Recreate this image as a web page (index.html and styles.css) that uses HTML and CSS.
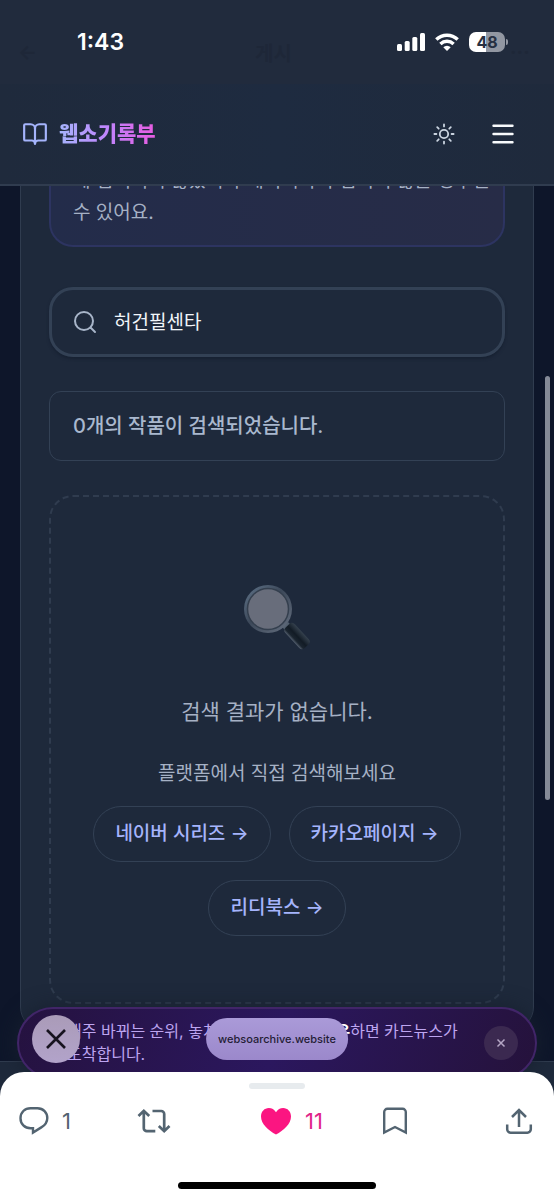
FILE: index.html
```html
<!DOCTYPE html>
<html lang="ko">
<head>
<meta charset="utf-8">
<meta name="viewport" content="width=device-width, initial-scale=1">
<title>웹소기록부</title>
<link rel="stylesheet" href="styles.css">
</head>
<body>
<div class="screen">
  <header class="header">
    <div class="status">
      <div class="underlay" aria-hidden="true"><span>←</span><span>게시</span><span>···</span></div>
      <time class="clock">1:43</time>
      <div class="indicators">
        <svg width="28" height="18" viewBox="0 0 28 18" fill="#fff" aria-hidden="true"><rect x="0" y="11" width="5" height="7" rx="1.5"/><rect x="7.700" y="8" width="5" height="10" rx="1.500"/><rect x="15.300" y="4" width="5" height="14" rx="1.500"/><rect x="23" y="0" width="5" height="18" rx="1.500"/></svg>
        <svg width="24" height="18" viewBox="0 0 24 18" fill="none" stroke="#fff" stroke-width="3.400" aria-hidden="true"><path d="M1.300 6.500a15.500 15.500 0 0 1 21.400 0"/><path d="M5.400 10.900a9.600 9.600 0 0 1 13.200 0"/><path d="M8.300 14.200a5.200 5.200 0 0 1 7.400 0L12 17.900z" fill="#fff" stroke="none"/></svg>
        <div class="battery"><span>48</span></div>
      </div>
    </div>
    <nav class="nav">
      <a class="brand" href="#">
        <svg width="26" height="26" viewBox="0 0 24 24" fill="none" stroke="#a5b4fc" stroke-width="2" stroke-linecap="round" stroke-linejoin="round" aria-hidden="true"><path d="M12 7v14"/><path d="M3 18a1 1 0 0 1-1-1V4a1 1 0 0 1 1-1h5a4 4 0 0 1 4 4 4 4 0 0 1 4-4h5a1 1 0 0 1 1 1v13a1 1 0 0 1-1 1h-6a3 3 0 0 0-3 3 3 3 0 0 0-3-3z"/></svg>
        <span>웹소기록부</span>
      </a>
      <div class="tools">
        <button class="tool" aria-label="테마 변경"><svg width="22" height="22" viewBox="0 0 22 22" fill="none" stroke="#cbd5e1" stroke-width="1.800" stroke-linecap="round"><circle cx="11" cy="11" r="4.200"/><path d="M11 1.400v2M11 18.600v2M1.400 11h2M18.600 11h2M4.200 4.200l1.500 1.500M16.300 16.300l1.500 1.500M4.200 17.800l1.500-1.500M16.300 5.700l1.500-1.500"/></svg></button>
        <button class="tool" aria-label="메뉴"><svg width="22" height="22" viewBox="0 0 22 22" stroke="#f8fafc" stroke-width="2.400" stroke-linecap="round"><path d="M1.500 2.700h19M1.500 11h19M1.500 19.200h19"/></svg></button>
      </div>
    </nav>
  </header>

  <main class="main">
    <section class="card">
      <p class="notice">에 검색되지 않았거나 데이터가 수집되지 않는 경우일 수 있어요.</p>
      <label class="search">
        <svg width="24" height="24" viewBox="0 0 24 24" fill="none" stroke="#a8b5c9" stroke-width="2" stroke-linecap="round" aria-hidden="true"><circle cx="11" cy="11" r="9"/><path d="M17.500 17.500l4.500 4.500"/></svg>
        <input type="text" value="허건필센타" aria-label="작품 검색">
      </label>
      <p class="count">0개의 작품이 검색되었습니다.</p>
      <div class="empty">
        <svg class="glass" width="68" height="68" viewBox="0 0 68 68" aria-hidden="true">
          <defs>
            <linearGradient id="rim" x1="0" y1="0" x2="1" y2="1"><stop offset="0" stop-color="#60748a"/><stop offset=".45" stop-color="#3c4859"/><stop offset="1" stop-color="#667080"/></linearGradient>
            <linearGradient id="grip" x1="0" y1="1" x2="0" y2="0"><stop offset="0" stop-color="#566170"/><stop offset=".2" stop-color="#1b2530"/><stop offset=".5" stop-color="#121b25"/><stop offset="1" stop-color="#35414e"/></linearGradient>
          </defs>
          <path d="M39 43l6-5 5 5-6 5z" fill="#536070"/>
          <rect x="40" y="45.500" width="28" height="13" rx="4" transform="rotate(47 54 52)" fill="url(#grip)"/>
          <circle cx="25" cy="25" r="24" fill="url(#rim)"/>
          <circle cx="25" cy="25" r="20.500" fill="#686d7b" stroke="#343f4e" stroke-width="1.500"/>
        </svg>
        <h2>검색 결과가 없습니다.</h2>
        <p>플랫폼에서 직접 검색해보세요</p>
        <div class="links">
          <a href="#">네이버 시리즈 →</a>
          <a href="#">카카오페이지 →</a>
          <a href="#">리디북스 →</a>
        </div>
      </div>
    </section>
    <footer class="footer"></footer>
    <div class="scrollbar"></div>
  </main>

  <aside class="banner">
    <p>매주 바뀌는 순위, 놓치지 마세요 — <strong>팔로우</strong>하면 카드뉴스가 도착합니다.</p>
    <button class="dismiss" aria-label="배너 닫기"><svg width="10" height="10" viewBox="0 0 10 10" stroke="#b5a7c5" stroke-width="1.500"><path d="M1.500 1.500l7 7M8.500 1.500l-7 7"/></svg></button>
  </aside>
  <button class="close" aria-label="닫기"><svg width="20" height="20" viewBox="0 0 20 20" stroke="#17131f" stroke-width="2.600"><path d="M1 1l18 18M19 1L1 19"/></svg></button>
  <div class="address">websoarchive.website</div>

  <div class="sheet">
    <div class="handle"></div>
    <div class="actions">
      <button class="action"><svg width="30" height="30" viewBox="0 0 30 30" fill="none" stroke="#536471" stroke-width="2.400"><path d="M11.500 2.200h7C24.300 2.200 28.300 6.600 28.300 12c0 4.300-2.200 7.200-6 9.400L14 26.600v-4.400h-2.500C5.700 22.200 1.500 18 1.500 12.200S5.700 2.200 11.500 2.200z"/></svg><span>1</span></button>
      <button class="action" aria-label="재게시"><svg width="34" height="28" viewBox="0 0 34 28" fill="none" stroke="#536471" stroke-width="2.700"><path d="M1.500 9l5.300-5.200L12.200 9M6.800 4.500v16.700a3 3 0 0 0 3 3h8.500M15.500 4h8.700a3 3 0 0 1 3 3v16.500M21.800 19l5.400 5.200 5.300-5.200"/></svg></button>
      <button class="action liked"><svg width="32" height="28" viewBox="0 0 32 28" fill="#fb1581"><path d="M16 27.500C8.500 23.500 1 17 1 9.500 1 4.500 4.500 1 8.800 1c3 0 5.600 1.500 7.200 4.300C17.600 2.500 20.200 1 23.200 1 27.500 1 31 4.500 31 9.500c0 7.500-7.500 14-15 18z"/></svg><span>11</span></button>
      <button class="action" aria-label="북마크"><svg width="26" height="28" viewBox="0 0 26 28" fill="none" stroke="#536471" stroke-width="2.400"><path d="M2.200 25.500V5a3.200 3.200 0 0 1 3.200-3.200h15.200A3.200 3.200 0 0 1 23.800 5v20.500L13 20z"/></svg></button>
      <button class="action" aria-label="공유"><svg width="28" height="28" viewBox="0 0 28 28" fill="none" stroke="#536471" stroke-width="2.500"><path d="M14 20V3M7 10l7-7 7 7M2.200 17.500v4.800a3.400 3.400 0 0 0 3.400 3.400h16.800a3.400 3.400 0 0 0 3.400-3.400v-4.800"/></svg></button>
    </div>
    <div class="home"></div>
  </div>
</div>
</body>
</html>
```
FILE: styles.css
```css
* { box-sizing: border-box; }
body {
  margin: 0;
  background: #0e162a;
  color: #a6b1c5;
  font-family: Inter, "Noto Sans CJK KR", sans-serif;
  word-break: keep-all;
}
p, h2 { margin: 0; font-weight: 400; }
button { border: 0; padding: 0; background: none; font: inherit; color: inherit; }
a { color: inherit; text-decoration: none; }
svg { display: block; flex: none; }

.screen { position: relative; height: 100vh; display: flex; flex-direction: column; overflow: hidden; }

.header { flex: none; background: #1f2a3c; border-bottom: 2px solid #303c4f; }
.status {
  position: relative;
  display: flex; align-items: center; justify-content: space-between;
  height: 84px; padding: 0 49px 0 77px;
  background: #212b3d;
}
.underlay {
  position: absolute; inset: 20px 24px 0 18px;
  display: flex; align-items: center; justify-content: space-between;
  color: #1e2738; font-size: 20px; font-weight: 700;
}
.clock { position: relative; color: #fff; font-size: 23px; line-height: 28px; font-weight: 600; }
.indicators { position: relative; display: flex; align-items: center; gap: 10px; }
.battery {
  position: relative; width: 36px; height: 20px; border-radius: 7px;
  background: linear-gradient(90deg, #fff 48%, #9297a2 48%);
  color: #273142; font-size: 16px; line-height: 20px; font-weight: 700; text-align: center;
}
.battery::after {
  content: ""; position: absolute; left: 37px; top: 7px; width: 2px; height: 6px;
  border-radius: 0 2px 2px 0; background: #9297a2;
}
.nav {
  display: flex; align-items: center; justify-content: space-between;
  height: 100px; padding: 0 40px 0 22px;
  background: linear-gradient(90deg, #1f2a3c, #1e2b40 50%, #1f2a3c);
}
.brand { display: flex; align-items: center; gap: 11px; font-size: 21px; line-height: 32px; font-weight: 800; }
.brand span {
  background: linear-gradient(90deg, #a5b4fc, #c084fc 50%, #e85be0);
  background-clip: text; -webkit-background-clip: text; color: transparent;
}
.tools { display: flex; gap: 37px; }
.tool { display: flex; }

.main { position: relative; flex: 1; overflow: hidden; display: flex; flex-direction: column; }
.card {
  flex: none; margin: -22px 20px 30px; padding: 0 28px 26px;
  background: #1e293b; border: 1px solid #303c4f; border-radius: 0 0 24px 24px;
}
.notice {
  padding: 0 12px 16px 22px; border: 2px solid #2d3461; border-top: 0; border-radius: 0 0 24px 24px;
  background: linear-gradient(90deg, #232c4a, #272c47);
  font-size: 19px; line-height: 32px;
}
.search {
  display: flex; align-items: center; gap: 17px;
  height: 70px; margin-top: 40px; padding: 0 21px;
  border: 3px solid #334155; border-radius: 24px;
  box-shadow: 0 2px 3px #172132;
}
.search input {
  flex: 1; min-width: 0; border: 0; padding: 2px 0 0; outline: 0; background: none;
  color: #f1f5f9; font: inherit; font-size: 19px; line-height: 28px;
}
.count {
  margin-top: 34px; padding: 20px 23px; border: 1px solid #334155; border-radius: 12px;
  color: #a9b8ce; font-size: 20px; line-height: 28px; font-weight: 500;
}
.empty {
  display: flex; flex-direction: column; align-items: center;
  margin-top: 34px; padding: 87px 24px 66px;
  border: 2px dashed #303c4f; border-radius: 24px;
}
.empty h2 { margin-top: 44px; font-size: 21px; line-height: 32px; }
.empty p { margin-top: 32px; font-size: 19px; line-height: 28px; }
.links { display: flex; flex-wrap: wrap; justify-content: center; gap: 18px; margin-top: 18px; }
.links a {
  padding: 13px 21px; border: 1px solid #334155; border-radius: 28px;
  color: #a5b4fc; font-size: 19px; line-height: 28px; font-weight: 500;
}
.footer { flex: 1; background: #1e293b; border-top: 1px solid #303c4f; }
.scrollbar {
  position: absolute; right: 4px; top: 190px; width: 5px; height: 424px;
  border-radius: 3px; background: #858a97;
}

.banner {
  position: absolute; left: 17px; right: 17px; bottom: 121px;
  display: flex; align-items: center; justify-content: space-between;
  height: 72px; padding: 0 17px 0 48px;
  border: 2px solid #412568; border-radius: 36px;
  background: linear-gradient(110deg, #25123f, #2b175e 50%, #25123b);
  box-shadow: 0 0 20px #17202f;
}
.banner p { max-width: 410px; color: #bda5f0; font-size: 16px; line-height: 23px; }
.banner strong { color: #fff; font-weight: 700; }
.dismiss {
  display: flex; align-items: center; justify-content: center; flex: none;
  width: 34px; height: 34px; border-radius: 50%; background: #3b2950;
}
.close {
  position: absolute; left: 32px; bottom: 137px;
  display: flex; align-items: center; justify-content: center;
  width: 48px; height: 48px; border-radius: 50%;
  background: linear-gradient(#aa9bb8, #b2a3ca);
}
.address {
  position: absolute; left: 50%; bottom: 140px; transform: translateX(-50%);
  padding: 0 12px; border-radius: 21px;
  background: linear-gradient(#aa9ad8, #9b88cb);
  color: #241d35; font-size: 11px; line-height: 42px; font-weight: 500;
}

.sheet {
  position: absolute; left: 0; right: 0; bottom: 0;
  display: flex; flex-direction: column; align-items: center;
  height: 128px; padding: 11px 0 11px;
  border-radius: 24px 24px 0 0; background: #fff; color: #536471;
}
.handle { width: 56px; height: 6px; border-radius: 3px; background: #e7ebee; }
.actions {
  display: grid; grid-template-columns: 29fr 30fr 30fr 30fr auto; align-items: center;
  width: 100%; margin-top: 17px; padding: 0 21px 0 19px;
}
.action { display: flex; align-items: center; gap: 13px; font-size: 22px; line-height: 30px; }
.liked { color: #e0248a; }
.home { width: 198px; height: 7px; margin-top: auto; border-radius: 4px; background: #000; }
```
